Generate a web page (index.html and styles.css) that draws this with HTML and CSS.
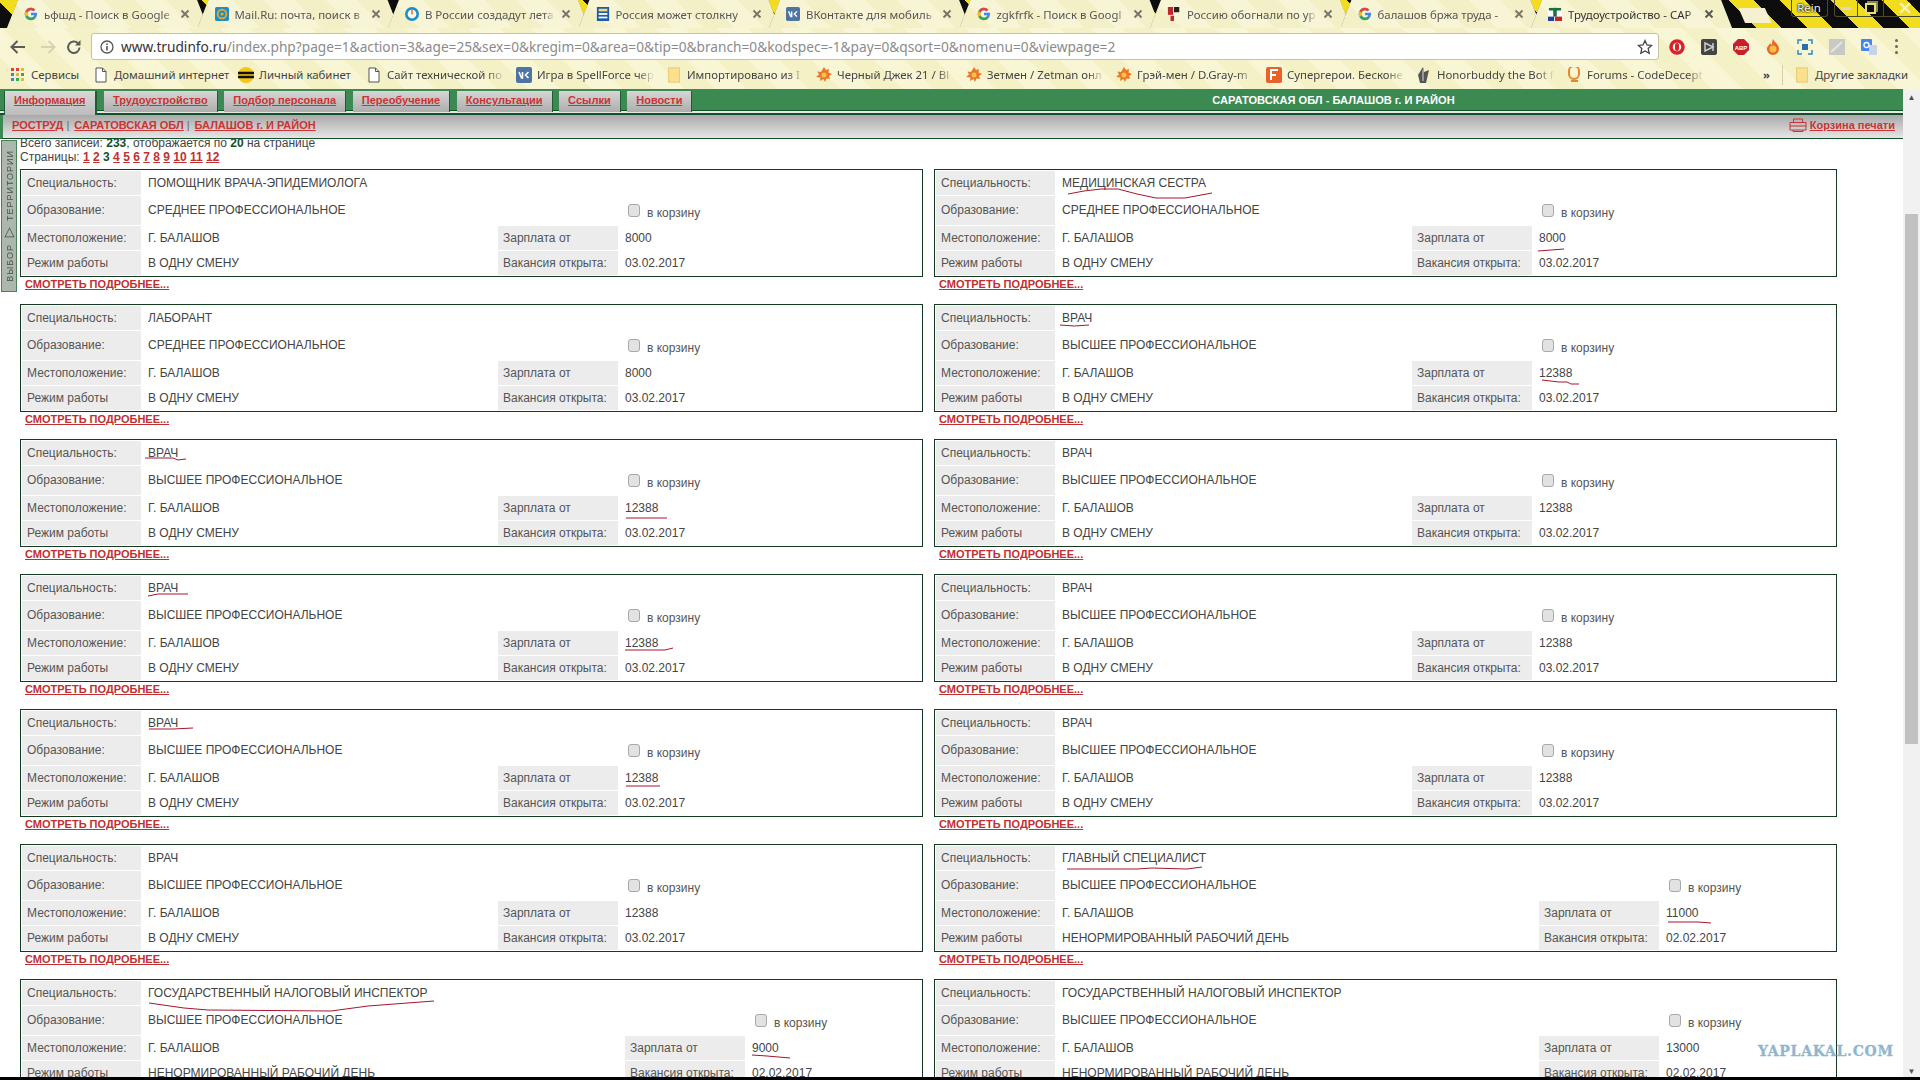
FILE: index.html
```html
<!DOCTYPE html>
<html lang="ru">
<head>
<meta charset="utf-8">
<title>Трудоустройство - САРАТОВСКАЯ ОБЛ</title>
<link rel="stylesheet" href="styles.css">
</head>
<body>

<svg class="defs" width="0" height="0">
  <symbol id="i-g" viewBox="0 0 16 16">
    <path d="M14.6 6.7H8v2.8h3.8C11.3 11.2 9.9 12.300 8 12.300A4.300 4.300 0 1 1 10.900 4.800l2-2A7.100 7.100 0 1 0 15 8c0-.5 0-.9-.4-1.300z" fill="#4285f4"/>
    <path d="M1.700 4.800A7.100 7.100 0 0 1 12.900 2.800l-2 2A4.300 4.300 0 0 0 4.100 6.300z" fill="#ea4335"/>
    <path d="M1.700 4.800l2.400 1.500a4.300 4.300 0 0 0 0 3.400L1.700 11.400a7.100 7.100 0 0 1 0-6.600z" fill="#fbbc05"/>
    <path d="M1.700 11.300l2.400-1.600A4.300 4.300 0 0 0 11 11l2.200 1.800A7.100 7.100 0 0 1 1.700 11.300z" fill="#34a853"/>
  </symbol>
  <symbol id="i-x" viewBox="0 0 10 10">
    <path d="M1.500 1.500l7 7M8.500 1.500l-7 7" stroke="currentColor" stroke-width="1.800" fill="none"/>
  </symbol>
  <symbol id="i-page" viewBox="0 0 14 16">
    <path d="M2 1h6.500L12 4.500V15H2z" fill="#fff" stroke="#555"/><path d="M8.500 1v3.500H12" fill="none" stroke="#555"/>
  </symbol>
  <symbol id="i-leaf" viewBox="0 0 16 16">
    <path d="M8 0l2 3 3-1-.5 3.500L16 7l-3 2 1 3-3.500-.5L9 15 7.500 12 4 14l.5-3.500L0 10l3-2.500L1.500 4.500 5 5z" fill="#e8792b"/>
    <circle cx="8" cy="8" r="2.500" fill="#f5c243"/>
  </symbol>
  <symbol id="i-folder" viewBox="0 0 14 18">
    <rect x="1" y="1" width="12" height="16" fill="#fbe08e" stroke="#e5c66c"/>
  </symbol>
</svg>

<header class="chrome">
  <div class="tabstrip">
    <div class="tab"><svg class="fav"><use href="#i-g"/></svg><span class="tab-title">ьфшд - Поиск в Google</span><svg class="tab-x"><use href="#i-x"/></svg></div>
    <div class="tab"><svg class="fav" viewBox="0 0 16 16"><rect width="16" height="16" rx="2" fill="#1b8fc9"/><circle cx="8" cy="8" r="5" fill="none" stroke="#f6a623" stroke-width="2"/><circle cx="8" cy="8" r="1.800" fill="#f6a623"/></svg><span class="tab-title">Mail.Ru: почта, поиск в</span><svg class="tab-x"><use href="#i-x"/></svg></div>
    <div class="tab"><svg class="fav" viewBox="0 0 16 16"><circle cx="8" cy="8" r="8" fill="#1b8fc9"/><circle cx="8" cy="8" r="5" fill="#fff"/><path d="M8 3.500v5" stroke="#f08a1d" stroke-width="2"/></svg><span class="tab-title">В России создадут лета</span><svg class="tab-x"><use href="#i-x"/></svg></div>
    <div class="tab"><svg class="fav" viewBox="0 0 16 16"><rect x="1" width="14" height="16" fill="#1d5aa8"/><rect x="3" y="2" width="10" height="3" fill="#f5d76e"/><rect x="3" y="7" width="10" height="2" fill="#fff"/><rect x="3" y="11" width="10" height="2" fill="#fff"/></svg><span class="tab-title">Россия может столкну</span><svg class="tab-x"><use href="#i-x"/></svg></div>
    <div class="tab"><svg class="fav" viewBox="0 0 16 16"><rect width="16" height="16" rx="2" fill="#4c75a3"/><path d="M3 5l2.500 6h1V5M12.500 5L9.500 8l3 3" stroke="#fff" stroke-width="1.600" fill="none"/></svg><span class="tab-title">ВКонтакте для мобиль</span><svg class="tab-x"><use href="#i-x"/></svg></div>
    <div class="tab"><svg class="fav"><use href="#i-g"/></svg><span class="tab-title">zgkfrfk - Поиск в Googl</span><svg class="tab-x"><use href="#i-x"/></svg></div>
    <div class="tab"><svg class="fav" viewBox="0 0 16 16"><rect x="1" width="6" height="9" fill="#c0282d"/><rect x="8" width="6" height="6" fill="#222"/><rect x="4" y="10" width="4" height="6" fill="#c0282d"/></svg><span class="tab-title">Россию обогнали по ур</span><svg class="tab-x"><use href="#i-x"/></svg></div>
    <div class="tab"><svg class="fav"><use href="#i-g"/></svg><span class="tab-title">балашов бржа труда - </span><svg class="tab-x"><use href="#i-x"/></svg></div>
    <div class="tab tab-active"><svg class="fav" viewBox="0 0 16 16"><rect width="16" height="16" fill="#fff"/><rect x="1" y="1" width="14" height="3" fill="#18713c"/><rect x="6" y="1" width="4" height="10" fill="#18713c"/><rect y="11" width="7" height="5" fill="#26409a"/><rect x="8" y="11" width="8" height="5" fill="#c0282d"/></svg><span class="tab-title">Трудоустройство - САР</span><svg class="tab-x"><use href="#i-x"/></svg></div>
    <div class="tab-new"></div>
    <div class="win-btns">
      <span class="win-user">Rein</span>
      <span class="win-btn win-btn-min"><i class="win-min"></i></span>
      <span class="win-btn win-btn-max"><i class="win-max"></i></span>
      <span class="win-btn win-close"><svg width="18" height="14"><use href="#i-x"/></svg></span>
    </div>
  </div>

  <div class="toolbar">
    <svg class="tb-nav" width="18" height="16" viewBox="0 0 18 16"><path d="M16 8H3M8.500 2L2.500 8l6 6" fill="none" stroke="#5b5b5b" stroke-width="2"/></svg>
    <svg class="tb-nav" width="18" height="16" viewBox="0 0 18 16"><path d="M2 8h13M9.500 2l6 6-6 6" fill="none" stroke="#d6d2b4" stroke-width="2"/></svg>
    <svg class="tb-nav" width="16" height="16" viewBox="0 0 16 16"><path d="M13.500 8.500a5.700 5.700 0 1 1-1.600-4.200" fill="none" stroke="#5b5b5b" stroke-width="2"/><path d="M14.500 1v5.500H9z" fill="#5b5b5b"/></svg>
    <div class="urlbar">
      <svg width="14" height="14" viewBox="0 0 14 14"><circle cx="7" cy="7" r="6" fill="none" stroke="#555" stroke-width="1.300"/><rect x="6.200" y="6" width="1.600" height="4.500" fill="#555"/><rect x="6.200" y="3.400" width="1.600" height="1.600" fill="#555"/></svg>
      <span class="url"><b>www.trudinfo.ru</b>/index.php?page=1&amp;action=3&amp;age=25&amp;sex=0&amp;kregim=0&amp;area=0&amp;tip=0&amp;branch=0&amp;kodspec=-1&amp;pay=0&amp;qsort=0&amp;nomenu=0&amp;viewpage=2</span>
      <svg class="url-star" width="16" height="16" viewBox="0 0 16 16"><path d="M8 1.500l2 4.400 4.700.5-3.500 3.200 1 4.700L8 11.900l-4.200 2.400 1-4.700L1.300 6.400 6 5.900z" fill="none" stroke="#444" stroke-width="1.300"/></svg>
    </div>
    <div class="ext-list">
      <svg width="16" height="16" viewBox="0 0 16 16"><circle cx="8" cy="8" r="6" fill="#fff" stroke="#d8232a" stroke-width="3.500"/><rect x="6" y="4" width="4" height="8" rx="2" fill="#d8232a"/></svg>
      <svg width="16" height="16" viewBox="0 0 16 16"><rect width="16" height="16" rx="2" fill="#444"/><path d="M4 4l8 4-8 4zM12 4v8" stroke="#ccc" stroke-width="1.500" fill="none"/></svg>
      <svg width="16" height="16" viewBox="0 0 16 16"><path d="M5 0h6l5 5v6l-5 5H5l-5-5V5z" fill="#c8202a"/><text x="8" y="10.500" class="ext-abp">ABP</text></svg>
      <svg width="16" height="16" viewBox="0 0 16 16"><path d="M8 0c1 3 6 5 6 10a6 6 0 0 1-12 0C2 7 4 7 5 4c1 1 1 2 1.500 2C7.500 4 7 2 8 0z" fill="#e8662a"/><circle cx="8" cy="10" r="3.500" fill="#f5c243"/></svg>
      <svg width="16" height="16" viewBox="0 0 16 16"><path d="M1 5V1h4M11 1h4v4M15 11v4h-4M5 15H1v-4" fill="none" stroke="#2a8cc4" stroke-width="1.500"/><rect x="5" y="5" width="6" height="6" fill="#2a6fa8"/></svg>
      <svg width="16" height="16" viewBox="0 0 16 16"><rect width="16" height="16" fill="#c9c9c4"/><path d="M2 13L13 3" stroke="#e6e6e0" stroke-width="2"/></svg>
      <svg width="16" height="16" viewBox="0 0 16 16"><rect width="11" height="12" rx="1" fill="#4285f4"/><rect x="8" y="6" width="8" height="10" fill="#c7d3e6"/><circle cx="5.500" cy="6" r="2.500" fill="none" stroke="#fff" stroke-width="1.300"/></svg>
      <span class="ext-menu"><i></i><i></i><i></i></span>
    </div>
  </div>

  <div class="bookmarks">
    <a class="bm bm-apps"><svg class="apps" width="13" height="13" viewBox="0 0 13 13"><g fill="#d8442f"><rect width="3" height="3"/><rect x="5" width="3" height="3"/></g><rect x="10" width="3" height="3" fill="#f2b32c"/><rect y="5" width="3" height="3" fill="#3f83e0"/><rect x="5" y="5" width="3" height="3" fill="#f2b32c"/><rect x="10" y="5" width="3" height="3" fill="#3aa757"/><rect y="10" width="3" height="3" fill="#3f83e0"/><rect x="5" y="10" width="3" height="3" fill="#3aa757"/><rect x="10" y="10" width="3" height="3" fill="#f2b32c"/></svg>Сервисы</a>
    <a class="bm bm-home"><svg><use href="#i-page"/></svg>Домашний интернет</a>
    <a class="bm bm-cab"><svg viewBox="0 0 16 16"><circle cx="8" cy="8" r="8" fill="#f5c518"/><path d="M0 6h16M0 10h16" stroke="#111" stroke-width="2.500"/></svg>Личный кабинет</a>
    <a class="bm bm-cut"><svg><use href="#i-page"/></svg><span>Сайт технической по</span></a>
    <a class="bm bm-cut"><svg viewBox="0 0 16 16"><rect width="16" height="16" rx="2" fill="#4c75a3"/><path d="M3 5l2.500 6h1V5M12.500 5L9.500 8l3 3" stroke="#fff" stroke-width="1.600" fill="none"/></svg><span>Игра в SpellForce чер</span></a>
    <a class="bm bm-cut"><svg><use href="#i-folder"/></svg><span>Импортировано из I</span></a>
    <a class="bm bm-cut"><svg><use href="#i-leaf"/></svg><span>Черный Джек 21 / Bl</span></a>
    <a class="bm bm-cut"><svg><use href="#i-leaf"/></svg><span>Зетмен / Zetman онл</span></a>
    <a class="bm bm-cut"><svg><use href="#i-leaf"/></svg><span>Грэй-мен / D.Gray-m</span></a>
    <a class="bm bm-cut"><svg viewBox="0 0 16 16"><rect width="16" height="16" rx="2" fill="#e8632a"/><path d="M5 13V3h7M5 8h5" stroke="#fff" stroke-width="2" fill="none"/></svg><span>Супергерои. Бесконе</span></a>
    <a class="bm bm-cut"><svg viewBox="0 0 16 16"><path d="M7 0l1 5 5-2-3 13H4L2 8z" fill="#555"/><path d="M7 3v11" stroke="#ddd"/></svg><span>Honorbuddy the Bot f</span></a>
    <a class="bm bm-cut"><svg viewBox="0 0 16 16"><path d="M3 4a5 5 0 0 1 10 0v3a5 5 0 0 1-10 0z" fill="none" stroke="#e8862a" stroke-width="2"/><path d="M5 14h7" stroke="#e8862a" stroke-width="2"/></svg><span>Forums - CodeDecept</span></a>
    <span class="bm-more">»</span>
    <a class="bm bm-other"><svg><use href="#i-folder"/></svg>Другие закладки</a>
  </div>
</header>

<div class="viewport">
  <div class="page">
    <nav class="mainnav">
      <a class="nav-tab nav-tab-on">Информация</a>
      <a class="nav-tab">Трудоустройство</a>
      <a class="nav-tab">Подбор персонала</a>
      <a class="nav-tab">Переобучение</a>
      <a class="nav-tab">Консультации</a>
      <a class="nav-tab">Ссылки</a>
      <a class="nav-tab">Новости</a>
      <div class="nav-title">САРАТОВСКАЯ ОБЛ - БАЛАШОВ г. И РАЙОН</div>
    </nav>
    <div class="crumbs">
      <a>РОСТРУД</a><span class="crumb-sep">|</span><a>САРАТОВСКАЯ ОБЛ</a><span class="crumb-sep">|</span><a>БАЛАШОВ г. И РАЙОН</a>
      <a class="basket"><svg width="18" height="14" viewBox="0 0 18 14"><path d="M4.500 4V1h9v3M1 12V4.500h16V12zM4 12v1.500h10V12M1 8h16" fill="none" stroke="#c8323a"/></svg><u>Корзина печати</u></a>
    </div>

    <main class="content">
      <div class="side-tab"><span>ВЫБОР <i>▽</i> ТЕРРИТОРИИ</span></div>
      <div class="rec-info">Всего записей: <b>233</b>, отображается по <b>20</b> на странице</div>
      <div class="pager">Страницы: <a>1</a> <a>2</a> <b>3</b> <a>4</a> <a>5</a> <a>6</a> <a>7</a> <a>8</a> <a>9</a> <a>10</a> <a>11</a> <a>12</a></div>

      <div class="vac-grid">

        <section class="vac-item"><div class="vac">
          <div class="lb">Специальность:</div><div class="val span3">ПОМОЩНИК ВРАЧА-ЭПИДЕМИОЛОГА</div>
          <div class="lb row-tall">Образование:</div><div class="val span2">СРЕДНЕЕ ПРОФЕССИОНАЛЬНОЕ</div><label class="cart"><input type="checkbox">в корзину</label>
          <div class="lb">Местоположение:</div><div class="val">Г. БАЛАШОВ</div><div class="lb">Зарплата от</div><div class="val">8000</div>
          <div class="lb">Режим работы</div><div class="val">В ОДНУ СМЕНУ</div><div class="lb">Вакансия открыта:</div><div class="val">03.02.2017</div>
        </div><a class="more">СМОТРЕТЬ ПОДРОБНЕЕ...</a></section>

        <section class="vac-item"><div class="vac">
          <div class="lb">Специальность:</div><div class="val span3"><span class="mk">МЕДИЦИНСКАЯ СЕСТРА<svg class="scrawl"><path d="M6 17L22 14 39 12 56 12 75 17 94 21 123 21 150 16"/></svg></span></div>
          <div class="lb row-tall">Образование:</div><div class="val span2">СРЕДНЕЕ ПРОФЕССИОНАЛЬНОЕ</div><label class="cart"><input type="checkbox">в корзину</label>
          <div class="lb">Местоположение:</div><div class="val">Г. БАЛАШОВ</div><div class="lb">Зарплата от</div><div class="val"><span class="mk">8000<svg class="scrawl"><path d="M-1 19L12 18 25 17"/></svg></span></div>
          <div class="lb">Режим работы</div><div class="val">В ОДНУ СМЕНУ</div><div class="lb">Вакансия открыта:</div><div class="val">03.02.2017</div>
        </div><a class="more">СМОТРЕТЬ ПОДРОБНЕЕ...</a></section>

        <section class="vac-item"><div class="vac">
          <div class="lb">Специальность:</div><div class="val span3">ЛАБОРАНТ</div>
          <div class="lb row-tall">Образование:</div><div class="val span2">СРЕДНЕЕ ПРОФЕССИОНАЛЬНОЕ</div><label class="cart"><input type="checkbox">в корзину</label>
          <div class="lb">Местоположение:</div><div class="val">Г. БАЛАШОВ</div><div class="lb">Зарплата от</div><div class="val">8000</div>
          <div class="lb">Режим работы</div><div class="val">В ОДНУ СМЕНУ</div><div class="lb">Вакансия открыта:</div><div class="val">03.02.2017</div>
        </div><a class="more">СМОТРЕТЬ ПОДРОБНЕЕ...</a></section>

        <section class="vac-item"><div class="vac">
          <div class="lb">Специальность:</div><div class="val span3"><span class="mk">ВРАЧ<svg class="scrawl"><path d="M-2 13Q12 15 27 13"/></svg></span></div>
          <div class="lb row-tall">Образование:</div><div class="val span2">ВЫСШЕЕ ПРОФЕССИОНАЛЬНОЕ</div><label class="cart"><input type="checkbox">в корзину</label>
          <div class="lb">Местоположение:</div><div class="val">Г. БАЛАШОВ</div><div class="lb">Зарплата от</div><div class="val"><span class="mk">12388<svg class="scrawl"><path d="M3 13L20 15 28 15 32 17 40 17"/></svg></span></div>
          <div class="lb">Режим работы</div><div class="val">В ОДНУ СМЕНУ</div><div class="lb">Вакансия открыта:</div><div class="val">03.02.2017</div>
        </div><a class="more">СМОТРЕТЬ ПОДРОБНЕЕ...</a></section>

        <section class="vac-item"><div class="vac">
          <div class="lb">Специальность:</div><div class="val span3"><span class="mk">ВРАЧ<svg class="scrawl"><path d="M-3 11L25 11 30 13 38 12"/></svg></span></div>
          <div class="lb row-tall">Образование:</div><div class="val span2">ВЫСШЕЕ ПРОФЕССИОНАЛЬНОЕ</div><label class="cart"><input type="checkbox">в корзину</label>
          <div class="lb">Местоположение:</div><div class="val">Г. БАЛАШОВ</div><div class="lb">Зарплата от</div><div class="val"><span class="mk">12388<svg class="scrawl"><path d="M1 16L42 16"/></svg></span></div>
          <div class="lb">Режим работы</div><div class="val">В ОДНУ СМЕНУ</div><div class="lb">Вакансия открыта:</div><div class="val">03.02.2017</div>
        </div><a class="more">СМОТРЕТЬ ПОДРОБНЕЕ...</a></section>

        <section class="vac-item"><div class="vac">
          <div class="lb">Специальность:</div><div class="val span3">ВРАЧ</div>
          <div class="lb row-tall">Образование:</div><div class="val span2">ВЫСШЕЕ ПРОФЕССИОНАЛЬНОЕ</div><label class="cart"><input type="checkbox">в корзину</label>
          <div class="lb">Местоположение:</div><div class="val">Г. БАЛАШОВ</div><div class="lb">Зарплата от</div><div class="val">12388</div>
          <div class="lb">Режим работы</div><div class="val">В ОДНУ СМЕНУ</div><div class="lb">Вакансия открыта:</div><div class="val">03.02.2017</div>
        </div><a class="more">СМОТРЕТЬ ПОДРОБНЕЕ...</a></section>

        <section class="vac-item"><div class="vac">
          <div class="lb">Специальность:</div><div class="val span3"><span class="mk">ВРАЧ<svg class="scrawl"><path d="M0 14L10 12 40 12"/></svg></span></div>
          <div class="lb row-tall">Образование:</div><div class="val span2">ВЫСШЕЕ ПРОФЕССИОНАЛЬНОЕ</div><label class="cart"><input type="checkbox">в корзину</label>
          <div class="lb">Местоположение:</div><div class="val">Г. БАЛАШОВ</div><div class="lb">Зарплата от</div><div class="val"><span class="mk">12388<svg class="scrawl"><path d="M0 13L40 13 48 11"/></svg></span></div>
          <div class="lb">Режим работы</div><div class="val">В ОДНУ СМЕНУ</div><div class="lb">Вакансия открыта:</div><div class="val">03.02.2017</div>
        </div><a class="more">СМОТРЕТЬ ПОДРОБНЕЕ...</a></section>

        <section class="vac-item"><div class="vac">
          <div class="lb">Специальность:</div><div class="val span3">ВРАЧ</div>
          <div class="lb row-tall">Образование:</div><div class="val span2">ВЫСШЕЕ ПРОФЕССИОНАЛЬНОЕ</div><label class="cart"><input type="checkbox">в корзину</label>
          <div class="lb">Местоположение:</div><div class="val">Г. БАЛАШОВ</div><div class="lb">Зарплата от</div><div class="val">12388</div>
          <div class="lb">Режим работы</div><div class="val">В ОДНУ СМЕНУ</div><div class="lb">Вакансия открыта:</div><div class="val">03.02.2017</div>
        </div><a class="more">СМОТРЕТЬ ПОДРОБНЕЕ...</a></section>

        <section class="vac-item"><div class="vac">
          <div class="lb">Специальность:</div><div class="val span3"><span class="mk">ВРАЧ<svg class="scrawl"><path d="M1 12L25 12 45 11"/></svg></span></div>
          <div class="lb row-tall">Образование:</div><div class="val span2">ВЫСШЕЕ ПРОФЕССИОНАЛЬНОЕ</div><label class="cart"><input type="checkbox">в корзину</label>
          <div class="lb">Местоположение:</div><div class="val">Г. БАЛАШОВ</div><div class="lb">Зарплата от</div><div class="val"><span class="mk">12388<svg class="scrawl"><path d="M1 14L35 14"/></svg></span></div>
          <div class="lb">Режим работы</div><div class="val">В ОДНУ СМЕНУ</div><div class="lb">Вакансия открыта:</div><div class="val">03.02.2017</div>
        </div><a class="more">СМОТРЕТЬ ПОДРОБНЕЕ...</a></section>

        <section class="vac-item"><div class="vac">
          <div class="lb">Специальность:</div><div class="val span3">ВРАЧ</div>
          <div class="lb row-tall">Образование:</div><div class="val span2">ВЫСШЕЕ ПРОФЕССИОНАЛЬНОЕ</div><label class="cart"><input type="checkbox">в корзину</label>
          <div class="lb">Местоположение:</div><div class="val">Г. БАЛАШОВ</div><div class="lb">Зарплата от</div><div class="val">12388</div>
          <div class="lb">Режим работы</div><div class="val">В ОДНУ СМЕНУ</div><div class="lb">Вакансия открыта:</div><div class="val">03.02.2017</div>
        </div><a class="more">СМОТРЕТЬ ПОДРОБНЕЕ...</a></section>

        <section class="vac-item"><div class="vac">
          <div class="lb">Специальность:</div><div class="val span3">ВРАЧ</div>
          <div class="lb row-tall">Образование:</div><div class="val span2">ВЫСШЕЕ ПРОФЕССИОНАЛЬНОЕ</div><label class="cart"><input type="checkbox">в корзину</label>
          <div class="lb">Местоположение:</div><div class="val">Г. БАЛАШОВ</div><div class="lb">Зарплата от</div><div class="val">12388</div>
          <div class="lb">Режим работы</div><div class="val">В ОДНУ СМЕНУ</div><div class="lb">Вакансия открыта:</div><div class="val">03.02.2017</div>
        </div><a class="more">СМОТРЕТЬ ПОДРОБНЕЕ...</a></section>

        <section class="vac-item"><div class="vac vac-wide">
          <div class="lb">Специальность:</div><div class="val span3"><span class="mk">ГЛАВНЫЙ СПЕЦИАЛИСТ<svg class="scrawl"><path d="M5 17L75 17 90 16 125 17 140 15"/></svg></span></div>
          <div class="lb row-tall">Образование:</div><div class="val span2">ВЫСШЕЕ ПРОФЕССИОНАЛЬНОЕ</div><label class="cart"><input type="checkbox">в корзину</label>
          <div class="lb">Местоположение:</div><div class="val">Г. БАЛАШОВ</div><div class="lb">Зарплата от</div><div class="val"><span class="mk">11000<svg class="scrawl"><path d="M2 15L32 15 45 16"/></svg></span></div>
          <div class="lb">Режим работы</div><div class="val">НЕНОРМИРОВАННЫЙ РАБОЧИЙ ДЕНЬ</div><div class="lb">Вакансия открыта:</div><div class="val">02.02.2017</div>
        </div><a class="more">СМОТРЕТЬ ПОДРОБНЕЕ...</a></section>

        <section class="vac-item"><div class="vac vac-wide">
          <div class="lb">Специальность:</div><div class="val span3"><span class="mk">ГОСУДАРСТВЕННЫЙ НАЛОГОВЫЙ ИНСПЕКТОР<svg class="scrawl"><path d="M1 16L36 21 60 23 183 24 220 19 286 14"/></svg></span></div>
          <div class="lb row-tall">Образование:</div><div class="val span2">ВЫСШЕЕ ПРОФЕССИОНАЛЬНОЕ</div><label class="cart"><input type="checkbox">в корзину</label>
          <div class="lb">Местоположение:</div><div class="val">Г. БАЛАШОВ</div><div class="lb">Зарплата от</div><div class="val"><span class="mk">9000<svg class="scrawl"><path d="M0 13L15 14 38 16"/></svg></span></div>
          <div class="lb">Режим работы</div><div class="val">НЕНОРМИРОВАННЫЙ РАБОЧИЙ ДЕНЬ</div><div class="lb">Вакансия открыта:</div><div class="val">02.02.2017</div>
        </div><a class="more">СМОТРЕТЬ ПОДРОБНЕЕ...</a></section>

        <section class="vac-item"><div class="vac vac-wide">
          <div class="lb">Специальность:</div><div class="val span3">ГОСУДАРСТВЕННЫЙ НАЛОГОВЫЙ ИНСПЕКТОР</div>
          <div class="lb row-tall">Образование:</div><div class="val span2">ВЫСШЕЕ ПРОФЕССИОНАЛЬНОЕ</div><label class="cart"><input type="checkbox">в корзину</label>
          <div class="lb">Местоположение:</div><div class="val">Г. БАЛАШОВ</div><div class="lb">Зарплата от</div><div class="val">13000</div>
          <div class="lb">Режим работы</div><div class="val">НЕНОРМИРОВАННЫЙ РАБОЧИЙ ДЕНЬ</div><div class="lb">Вакансия открыта:</div><div class="val">02.02.2017</div>
        </div><a class="more">СМОТРЕТЬ ПОДРОБНЕЕ...</a></section>

      </div>
    </main>
  </div>

  <div class="scrollbar">
    <span class="sb-arrow">▲</span>
    <div class="sb-track"><div class="sb-thumb"></div></div>
    <span class="sb-arrow">▼</span>
  </div>
</div>

<div class="watermark">YAPLAKAL.COM</div>
<div class="black-edge"></div>

</body>
</html>
```

FILE: styles.css
```css
html, body {
  margin: 0;
  height: 1080px;
  overflow: hidden;
  background: #fff;
}

body {
  display: flex;
  flex-direction: column;
  font-family: "Liberation Sans", Arial, sans-serif;
  font-size: 12px;
  color: #444;
}

.defs {
  position: absolute;
}

/* browser chrome */
.chrome {
  flex: 0 0 89px;
  font-family: "Noto Sans", sans-serif;
  background: repeating-linear-gradient(45deg, #f5f1c6 0 22px, #f9f6d6 22px 44px);
}

.tabstrip {
  height: 28px;
  display: flex;
  padding-left: 7px;
  background: repeating-linear-gradient(45deg, #0d0d0d 0 18px, #f2dc1e 18px 36px);
}

.tab {
  position: relative;
  flex: 0 0 201px;
  margin-right: -10.5px;
  height: 28px;
  display: flex;
  align-items: center;
  padding-left: 17px;
  box-sizing: border-box;
  filter: drop-shadow(0 0 0.6px #77745a);
  color: #555;
}

.tab::before {
  content: "";
  position: absolute;
  inset: 0;
  clip-path: polygon(0 100%, 11px 0, calc(100% - 11px) 0, 100% 100%);
  background: repeating-linear-gradient(45deg, #f3efc6 0 22px, #f8f5d6 22px 44px);
}

.tab-active {
  z-index: 2;
  color: #333;
}

.tab > * {
  position: relative;
}

.fav {
  flex: 0 0 14px;
  width: 14px;
  height: 14px;
  margin-right: 6px;
}

.tab-title {
  flex: 0 0 130px;
  overflow: hidden;
  white-space: pre;
  font-size: 11.4px;
  -webkit-mask-image: linear-gradient(90deg, #000 92%, transparent);
  mask-image: linear-gradient(90deg, #000 92%, transparent);
}

.tab-x {
  flex: none;
  width: 10px;
  height: 10px;
  margin-left: 6px;
  color: #76746a;
}

.tab-active .tab-x {
  color: #555;
}

.tab-new {
  flex: 0 0 33px;
  height: 15px;
  margin: 8px 0 0 17px;
  background: #f4f0d0;
  clip-path: polygon(0 0, 80% 0, 100% 100%, 20% 100%);
}

.win-btns {
  flex: 1;
  display: flex;
  height: 17px;
  margin-left: 19px;
}

.win-user {
  flex: 0 0 37px;
  box-sizing: border-box;
  border: 1px solid #4a4a30;
  border-top: 0;
  border-radius: 0 0 3px 3px;
  color: #f2f2f2;
  font-size: 11.4px;
  line-height: 16px;
  text-align: center;
  text-shadow: 0 0 2px #000, 0 0 2px #000;
}

.win-btn {
  box-sizing: border-box;
  border: 1px solid #4a4a30;
  border-top: 0;
  display: flex;
  align-items: center;
  justify-content: center;
  color: #f6f2b2;
}

.win-btn-min {
  flex: 0 0 24px;
  margin-left: 6px;
  border-radius: 0 0 0 3px;
}

.win-btn-max {
  flex: 0 0 26px;
  border-left: 0;
}

.win-close {
  flex: 0 0 43px;
  border-left: 0;
  border-radius: 0 0 3px 0;
}

.win-min {
  width: 10px;
  height: 3px;
  background: #d8d8d0;
}

.win-max {
  width: 7px;
  height: 7px;
  border: 2px solid #e6dc80;
  box-shadow: 2px -2px 0 0 #8a8650;
}

.toolbar {
  height: 32px;
  display: flex;
  align-items: center;
  padding-top: 5px;
  box-sizing: border-box;
}

.tb-nav {
  flex: none;
  margin-left: 9px;
}

.tb-nav:nth-child(2) {
  margin-left: 12px;
}

.urlbar {
  flex: 0 0 1568px;
  height: 27px;
  margin-left: 9px;
  box-sizing: border-box;
  display: flex;
  align-items: center;
  padding: 0 5px 0 8px;
  background: #fff;
  border: 1px solid #c4c1a4;
  border-radius: 3px;
}

.url {
  flex: 1;
  margin-left: 7px;
  font-size: 13.7px;
  color: #8b8b8b;
  white-space: nowrap;
}

.url b {
  font-weight: 400;
  color: #333;
}

.ext-list {
  flex: 1;
  display: flex;
  align-items: center;
  gap: 16px;
  padding-left: 10px;
}

.ext-abp {
  fill: #fff;
  font: bold 6px "Liberation Sans", sans-serif;
  text-anchor: middle;
}

.ext-menu {
  display: flex;
  flex-direction: column;
  gap: 3px;
  margin-left: 2px;
}

.ext-menu i {
  width: 3px;
  height: 3px;
  border-radius: 50%;
  background: #666;
}

.bookmarks {
  height: 29px;
  display: flex;
  align-items: center;
  padding-left: 11px;
  font-size: 11.4px;
  color: #444;
  white-space: nowrap;
}

.bm {
  display: flex;
  align-items: center;
  flex: none;
  box-sizing: border-box;
}

.bm svg {
  flex: none;
  width: 16px;
  height: 16px;
  margin-right: 5px;
}

.bm svg.apps {
  width: 13px;
  height: 13px;
  margin-right: 7px;
}

.bm-apps { width: 82px; }
.bm-home { width: 145px; }
.bm-cab { width: 128px; }
.bm-cut { width: 150px; }

.bm-cut span {
  width: 118px;
  overflow: hidden;
  -webkit-mask-image: linear-gradient(90deg, #000 85%, transparent);
  mask-image: linear-gradient(90deg, #000 85%, transparent);
}

.bm-more {
  flex: none;
  width: 19px;
  margin-left: 47px;
  height: 20px;
  line-height: 19px;
  font-weight: 700;
  border-right: 1px solid #d6d2a8;
}

.bm-other {
  margin-left: 11px;
}

/* page */
.viewport {
  flex: 1;
  min-height: 0;
  display: flex;
}

.page {
  flex: 1;
  min-width: 0;
  display: flex;
  flex-direction: column;
}

.scrollbar {
  flex: 0 0 17px;
  display: flex;
  flex-direction: column;
  background: #f1f1f1;
  color: #505050;
  font-size: 8px;
  line-height: 17px;
  text-align: center;
}

.sb-track {
  flex: 1;
  padding: 108px 2px 0;
}

.sb-thumb {
  height: 530px;
  background: #c1c1c1;
}

.mainnav {
  flex: 0 0 25px;
  box-sizing: border-box;
  display: flex;
  gap: 6.6px;
  padding: 2px 0 0 4px;
  background: linear-gradient(#3a8a52 0 21px, #12502a 21px 22px, #e4ebe4 22px 24px, #12502a 24px);
}

.nav-tab {
  height: 21px;
  box-sizing: border-box;
  padding: 0 9px;
  line-height: 18px;
  font-size: 11px;
  font-weight: 700;
  color: #cc3333;
  text-decoration: underline;
  background: linear-gradient(#d6d6d6, #adadad);
  border-right: 1px solid #1e5c34;
}

.nav-tab-on {
  height: 24px;
  position: relative;
  z-index: 1;
  padding-right: 10px;
  background: linear-gradient(#d8d8d8, #bcbcbc);
  border-left: 1px solid #1e5c34;
  border-right: 2px solid #1e5c34;
}

.nav-title {
  flex: 1;
  padding-left: 65px;
  line-height: 19px;
  text-align: center;
  font-size: 11.1px;
  font-weight: 700;
  color: #fff;
}

.crumbs {
  flex: 0 0 24px;
  box-sizing: border-box;
  display: flex;
  align-items: center;
  position: relative;
  z-index: 1;
  padding: 0 8px 3px 9px;
  background: linear-gradient(#a9a9a9, #e6e6e6);
  border-bottom: 1px solid #12502a;
  border-left: 3px solid #3a8a52;
  font-size: 11px;
  font-weight: 700;
  color: #cc3333;
  text-decoration: underline;
}

.crumb-sep {
  display: inline-block;
  margin: 0 5px 0 3px;
  font-weight: 400;
  color: #666;
}

.basket {
  margin-left: auto;
  display: flex;
  align-items: center;
  gap: 3px;
  font-size: 11px;
}

.content {
  flex: 1;
  min-height: 0;
  position: relative;
  padding-left: 20px;
}

.side-tab {
  position: absolute;
  left: 1px;
  top: 1px;
  width: 16px;
  height: 152px;
  box-sizing: border-box;
  display: flex;
  align-items: center;
  justify-content: center;
  background: #acb8ac;
  border: 1px solid #4d7f5b;
  color: #4d4d4d;
  font-size: 9px;
  letter-spacing: 1px;
  white-space: nowrap;
}

.side-tab span {
  writing-mode: vertical-rl;
  transform: rotate(180deg);
}

.side-tab i {
  font-style: normal;
  font-size: 13px;
  font-family: "DejaVu Sans", sans-serif;
}

.rec-info {
  margin-top: -3px;
  line-height: 14px;
}

.pager {
  line-height: 14px;
}

.rec-info b,
.pager b {
  color: #17502c;
}

.pager a {
  font-weight: 700;
  color: #c23030;
  text-decoration: underline;
}

.vac-grid {
  margin-top: 5px;
  display: grid;
  grid-template-columns: 903px 903px;
  column-gap: 11px;
  grid-auto-rows: 135px;
}

.vac {
  box-sizing: border-box;
  height: 108px;
  display: grid;
  grid-template-columns: 119px 355px 120px 1fr;
  grid-template-rows: 24px 29px 24px 24px;
  gap: 1px;
  padding: 1px;
  border: 1px solid #143a22;
}

.vac-wide {
  grid-template-columns: 119px 482px 120px 1fr;
}

.lb {
  background: #ececec;
  padding: 0 5px;
  line-height: 24px;
  color: #555;
  white-space: nowrap;
}

.row-tall {
  line-height: 29px;
}

.val {
  padding: 0 6px;
  line-height: 24px;
  white-space: nowrap;
}

.span2 {
  grid-column: span 2;
  line-height: 29px;
}

.span3 {
  grid-column: span 3;
}

.cart {
  display: flex;
  align-items: flex-start;
  padding: 8px 0 0 9px;
  line-height: 18px;
  color: #555;
}

.cart input {
  appearance: none;
  width: 12px;
  height: 13px;
  margin: 0 7px 0 0;
  background: #e2e2e2;
  border: 1px solid #a8a8a8;
  border-radius: 3px;
}

.more {
  display: inline-block;
  margin: -1px 0 0 5px;
  line-height: 14px;
  font-size: 11px;
  font-weight: 700;
  color: #c03030;
  text-decoration: underline;
}

/* pen marks drawn over the screenshot */
.mk {
  position: relative;
  display: inline-block;
  line-height: 14px;
}

.scrawl {
  position: absolute;
  left: 0;
  top: 1px;
  width: 10px;
  height: 10px;
  overflow: visible;
}

.scrawl path {
  fill: none;
  stroke: #a5162e;
  stroke-width: 1;
}

.watermark {
  position: absolute;
  left: 1758px;
  top: 1043px;
  font-family: "DejaVu Serif", serif;
  font-size: 14px;
  font-weight: 700;
  letter-spacing: 0.7px;
  color: #8fb6cf;
  -webkit-text-stroke: 0.3px #8fb6cf;
}

.black-edge {
  position: absolute;
  left: 0;
  right: 0;
  top: 1077px;
  height: 3px;
  background: #000;
}
```
